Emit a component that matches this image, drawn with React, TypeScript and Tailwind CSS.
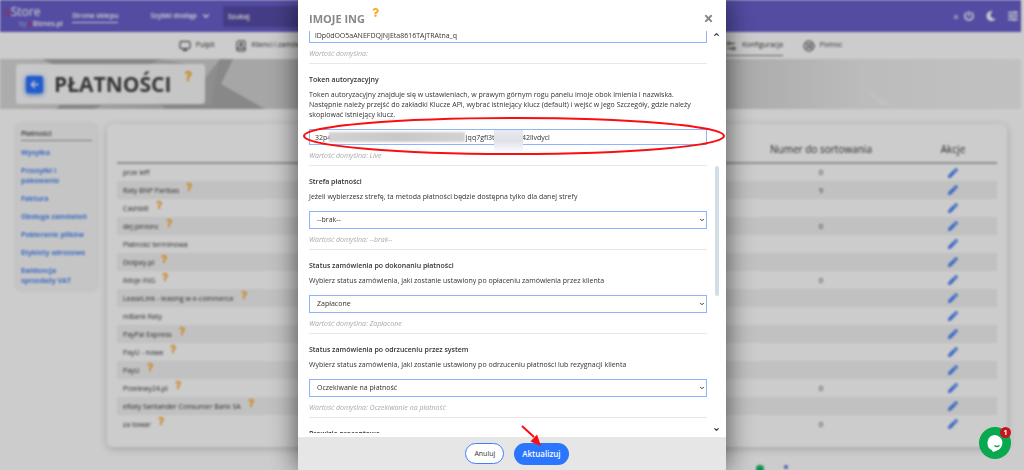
import type { ReactNode } from 'react';
import { FaArrowLeft, FaMoon, FaPen, FaPowerOff, FaQuestion, FaTimes } from 'react-icons/fa';
import { BookUser, ChevronDown, ChevronUp, LifeBuoy, Monitor, Settings2 } from 'lucide-react';

type Payment = { name: string; help?: boolean; order?: string };

const payments: Payment[] = [
  { name: 'prze leff', order: '0' },
  { name: 'Raty BNP Paribas', help: true, order: '9' },
  { name: 'Cashbill', help: true },
  { name: 'dej pinionc', help: true, order: '0' },
  { name: 'Płatność terminowa' },
  { name: 'Dotpay.pl', help: true },
  { name: 'iMoje ING', help: true, order: '0' },
  { name: 'LeaseLink - leasing w e-commerce', help: true },
  { name: 'mBank Raty' },
  { name: 'PayPal Express', help: true },
  { name: 'PayU - nowe', help: true },
  { name: 'PayU', help: true },
  { name: 'Przelewy24.pl', help: true, order: '0' },
  { name: 'eRaty Santander Consumer Bank SA', help: true },
  { name: 'za towar', help: true, order: '0' },
];

const sideLinks = [
  'Wysyłka',
  'Przesyłki i pakowanie',
  'Faktura',
  'Obsługa zamówień',
  'Pobieranie plików',
  'Etykiety adresowe',
  'Ewidencja sprzedaży VAT',
];

function TopBar() {
  return (
    <header className="flex h-8 items-center bg-[#685fcc] text-[8px] text-white">
      <div className="w-[72px] pt-px pl-[5px]">
        <div className="text-[12px] leading-[14px]">
          <span className="text-[#e0245e]">s</span>Store
        </div>
        <div className="pl-[14px] text-[7px] leading-[10px]">
          <span className="text-white/50">by</span> <span className="font-bold text-[#e0245e]">e</span>
          <span className="font-semibold">Biznes.pl</span>
        </div>
      </div>
      <a href="#sklep" className="border-b border-white text-[7px] leading-3 font-semibold">
        Strona sklepu
      </a>
      <button className="ml-8 flex items-center gap-1 text-[7px] font-semibold">
        Szybki dostęp <ChevronDown size={10} strokeWidth={3} />
      </button>
      <input
        aria-label="Szukaj"
        placeholder="Szukaj"
        className="ml-3 h-[21px] w-1/3 rounded-xs bg-[#554da8] px-[5px] text-[7px] font-semibold placeholder:text-white"
      />
      <div className="ml-auto flex items-center gap-3 pr-[3px]">
        <span className="flex items-center gap-[6px]">
          a
          <button aria-label="Wyloguj">
            <FaPowerOff size={10} />
          </button>
        </span>
        <button aria-label="Tryb nocny">
          <FaMoon size={10} />
        </button>
        <button aria-label="Ustawienia">
          <svg width="10" height="10" viewBox="0 0 10 10" stroke="currentColor" strokeWidth="1.3">
            <path d="M0 1.5h10M0 5h10M0 8.5h10M7 0v3M3 3.5v3M6 7v3" />
          </svg>
        </button>
      </div>
    </header>
  );
}

function NavItem({ icon, label, active }: { icon: ReactNode; label: string; active?: boolean }) {
  return (
    <a
      href="#nav"
      className={`flex h-[20px] items-center gap-[5px] border-b ${active ? 'border-[#777]' : 'border-transparent'}`}
    >
      {icon}
      {label}
    </a>
  );
}

function MainNav() {
  return (
    <nav className="flex h-[27px] justify-center bg-white pt-1 text-[7px] text-[#333]">
      <div className="flex w-[65%] justify-between">
        <div className="flex gap-5">
          <NavItem icon={<Monitor size={12} />} label="Pulpit" />
          <NavItem icon={<BookUser size={12} />} label="Klienci i zamówienia" />
        </div>
        <div className="flex gap-5">
          <NavItem icon={<Settings2 size={12} />} label="Konfiguracja" active />
          <NavItem icon={<LifeBuoy size={12} />} label="Pomoc" />
        </div>
      </div>
    </nav>
  );
}

function Banner() {
  return (
    <div className="relative flex h-[50px] items-center overflow-hidden bg-[#aeaeae] px-4">
      <svg className="absolute inset-0 h-full w-full" viewBox="0 0 1021 50" preserveAspectRatio="none">
        <defs>
          <linearGradient id="fade" x1="0" x2="1" y1="0" y2="0">
            <stop offset="0" stopColor="#d9d9d9" />
            <stop offset="0.05" stopColor="#d4d4d4" />
            <stop offset="0.25" stopColor="#a8a8a8" />
            <stop offset="0.7" stopColor="#d2d2d2" />
            <stop offset="0.85" stopColor="#ececec" />
            <stop offset="1" stopColor="#f2f2f2" />
          </linearGradient>
        </defs>
        <rect width="1021" height="50" fill="url(#fade)" />
        <path d="M42 0h118l-14 8H58zM60 46h42l-8 4H56zM162 46h50L219 0h102v50H165z" fill="#aaa" />
        <path d="M160 0h60L204 20V8z" fill="#cfcfcf" />
        <path d="M221 25l12-25h90v50h-58z" fill="#d0d0d0" />
        <path d="M862 28l32 18-12 2z" fill="#f0f0f0" />
      </svg>
      <div className="relative flex h-10 items-center rounded-sm bg-white/90 pr-3 pl-[10px]">
        <a
          href="#wstecz"
          aria-label="Wstecz"
          className="flex size-[17px] items-center justify-center rounded-xs bg-[#2b72ff] text-white shadow-[0_1px_5px_#2b72ff]"
        >
          <FaArrowLeft size={9} />
        </a>
        <h1 className="ml-[11px] text-[21px] leading-none font-bold text-[#444]">PŁATNOŚCI</h1>
        <FaQuestion size={10} className="mb-4 ml-3 text-[#ffa51f]" />
      </div>
    </div>
  );
}

function SideMenu() {
  return (
    <aside className="w-[81px] shrink-0 self-start rounded-md bg-[#f7f7f7] px-[5px] pt-[5px] pb-1 text-[7px] leading-[10px] font-bold shadow-[0_0_4px_rgba(0,0,0,0.12)]">
      <div className="mb-[7px] border-b border-[#999] pb-px font-semibold text-[#444]">Płatności</div>
      <ul className="flex flex-col gap-2">
        {sideLinks.map((link) => (
          <li key={link}>
            <a href="#menu" className="text-[#4c87f5]">
              {link}
            </a>
          </li>
        ))}
      </ul>
    </aside>
  );
}

function PaymentsTable() {
  return (
    <section className="min-w-0 flex-1 rounded-md bg-white px-[10px] pt-3 pb-[14px] shadow-[0_2px_8px_rgba(0,0,0,0.2)]">
      <table className="w-full table-fixed text-[7px] leading-[10px] text-[#333]">
        <colgroup>
          <col className="w-[70%]" />
          <col className="w-[20%]" />
          <col className="w-[10%]" />
        </colgroup>
        <thead>
          <tr className="h-[27px] border-b-2 border-[#b5b5b5] text-[10px]">
            <td />
            <th className="font-medium">Numer do sortowania</th>
            <th className="font-medium">Akcje</th>
          </tr>
        </thead>
        <tbody>
          {payments.map((p) => (
            <tr key={p.name} className="h-[18px] even:bg-[#f2f2f2]">
              <td className="pt-px pl-[6px]">
                <span className="flex items-center gap-[6px]">
                  {p.name}
                  {p.help && <FaQuestion size={8} className="-mt-2 text-[#ffa51f]" />}
                </span>
              </td>
              <td className="pt-px text-center">{p.order}</td>
              <td className="text-center">
                <button aria-label="Edytuj" className="block w-full">
                  <FaPen size={10} className="mx-auto text-[#4c87f5]" />
                </button>
              </td>
            </tr>
          ))}
        </tbody>
      </table>
    </section>
  );
}

const box = 'w-full border border-[#8db4ff] bg-white text-[7px] text-[#333] outline-none';

function Hint({ children }: { children: ReactNode }) {
  return <p className="mt-[6px] text-[#aaa] italic">Wartość domyślna: {children}</p>;
}

function SelectField({ id, label, text, value }: { id: string; label: string; text: string; value: string }) {
  return (
    <div className="border-b border-[#e8e8e8] pt-[11px] pb-1">
      <label htmlFor={id} className="block font-semibold">
        {label}
      </label>
      <p className="mt-[5px]">{text}</p>
      <div className="relative mt-[9px]">
        <select id={id} className={`${box} block h-[18px] appearance-none pl-[7px]`}>
          <option>{value}</option>
        </select>
        <ChevronDown size={6} strokeWidth={4} className="pointer-events-none absolute top-[6px] right-[2px]" />
      </div>
      <Hint>{value}</Hint>
    </div>
  );
}

function TokenField() {
  return (
    <div className="border-b border-[#e8e8e8] pt-[11px] pb-1">
      <label htmlFor="token" className="block font-semibold">
        Token autoryzacyjny
      </label>
      <p className="mt-[5px]">
        Token autoryzacyjny znajduje się w ustawieniach, w prawym górnym rogu panelu imoje obok imienia i nazwiska.
        Następnie należy przejść do zakładki Klucze API, wybrać istniejący klucz (default) i wejść w jego Szczegóły,
        gdzie należy skopiować istniejący klucz.
      </p>
      <div className="relative mt-[9px]">
        <input
          id="token"
          defaultValue={'32p4' + ' '.repeat(74) + 'jqq7gfi3t' + ' '.repeat(15) + '42llvdycl'}
          className={`${box} block h-4 px-[5px]`}
        />
        {/* masked parts of the token */}
        <span className="absolute top-[3px] left-5 h-[10px] w-[136px] bg-linear-to-r from-[#d2d2d2] via-[#c8c8c8] to-[#d2d2d2] blur-[1px]" />
        <span className="absolute top-px left-[185px] h-[21px] w-[29px] bg-linear-to-b from-[#e9eaee] via-[#dfe1e6] to-[#f7f9ff]" />
        {/* marker around the field */}
        <svg
          className="pointer-events-none absolute -top-[13px] -left-[7px] z-10 h-10 w-[calc(100%+26px)]"
          viewBox="0 0 424 40"
          preserveAspectRatio="none"
          fill="none"
        >
          <ellipse cx="212" cy="20" rx="210" ry="18" stroke="#fa0f0f" strokeWidth="2" />
        </svg>
      </div>
      <Hint>Live</Hint>
    </div>
  );
}

function EditDialog() {
  return (
    <div
      role="dialog"
      aria-labelledby="dialog-title"
      className="relative flex h-full w-full max-w-[428px] flex-col bg-white text-[7px] leading-[10px] text-[#333] shadow-[0_0_26px_rgba(0,0,0,0.65)]"
    >
      <div className="flex h-[31px] shrink-0 items-center pt-[6px] pr-3 pl-[11px]">
        <h2 id="dialog-title" className="text-[11px] font-bold text-[#888]">
          IMOJE ING
        </h2>
        <FaQuestion size={9} className="mb-3 ml-[6px] text-[#ffa51f]" />
        <button aria-label="Zamknij" className="ml-auto text-[#888]">
          <FaTimes size={11} />
        </button>
      </div>

      <div className="flex min-h-0 flex-1 overflow-hidden">
        <div className="min-w-0 flex-1 pl-[11px]">
          <div className="-mt-1 border-b border-[#e8e8e8] pb-1">
            <input
              aria-label="Klucz"
              defaultValue="lDp0dOO5aANEFDQJNJEta8616TAjTRAtna_q"
              className={`${box} block h-4 px-[5px]`}
            />
            <Hint>{null}</Hint>
          </div>
          <TokenField />
          <SelectField
            id="zone"
            label="Strefa płatności"
            text="Jeżeli wybierzesz strefę, ta metoda płatności będzie dostępna tylko dla danej strefy"
            value="--brak--"
          />
          <SelectField
            id="paid"
            label="Status zamówienia po dokonaniu płatności"
            text="Wybierz status zamówienia, jaki zostanie ustawiony po opłaceniu zamówienia przez klienta"
            value="Zapłacone"
          />
          <SelectField
            id="rejected"
            label="Status zamówienia po odrzuceniu przez system"
            text="Wybierz status zamówienia, jaki zostanie ustawiony po odrzuceniu płatności lub rezygnacji klienta"
            value="Oczekiwanie na płatność"
          />
          <p className="pt-[11px] font-semibold">Prowizja procentowa</p>
        </div>
        {/* scrollbar */}
        <div className="flex w-[19px] shrink-0 flex-col items-center">
          <ChevronUp size={7} strokeWidth={4} />
          <div className="flex w-1 flex-1 flex-col">
            <div className="grow-[128]" />
            <div className="grow-[130] rounded-xs bg-[#d3dde6]" />
            <div className="grow-[130]" />
          </div>
          <ChevronDown size={7} strokeWidth={4} />
        </div>
      </div>

      <div className="mt-1 flex h-[33px] shrink-0 items-center justify-center gap-[10px] bg-[#e6e6e6] pl-[10px]">
        <button className="h-[21px] rounded-full border border-[#3f80ff] bg-white px-2">Anuluj</button>
        <div className="relative">
          <button className="h-[22px] rounded-full bg-[#2b76ff] px-2 text-[8px] font-semibold text-white">
            Aktualizuj
          </button>
          <svg
            className="pointer-events-none absolute -top-[18px] left-[6px]"
            width="24"
            height="24"
            viewBox="0 0 24 24"
            fill="#fa0f0f"
          >
            <path d="M2 1l12 11" stroke="#fa0f0f" strokeWidth="2" />
            <path d="M21 21L10.500 16.500L17 9.500Z" />
          </svg>
        </div>
      </div>
    </div>
  );
}

function ChatButton() {
  return (
    <button aria-label="Czat" className="fixed right-[13px] bottom-[11px] size-8 rounded-full bg-[#0aa84f]">
      <svg viewBox="0 0 32 32" className="size-8">
        <path d="M16 8a8 8 0 0 0-3 15.200L14 25l3.500-1.300A8 8 0 0 0 16 8z" fill="#fff" />
        <path d="M15.500 18.500q2.500 2 5 0" stroke="#0aa84f" strokeWidth="1.400" fill="none" />
      </svg>
      <span className="absolute top-0 right-0 flex size-[11px] items-center justify-center rounded-full bg-[#c4161c] text-[7px] leading-none font-bold text-white">
        1
      </span>
    </button>
  );
}

export default function App() {
  return (
    <div className="relative h-screen overflow-hidden bg-white font-['Open_Sans',sans-serif]">
      {/* Page under the dialog */}
      <div className="pr-[3px] blur-[1px]">
        <TopBar />
        <MainNav />
        <Banner />
        <main className="flex gap-[10px] pt-[15px] pr-[14px] pl-4">
          <SideMenu />
          <PaymentsTable />
        </main>
        <footer className="flex pt-[18px]">
          <span className="ml-[74%] size-2 rounded-full bg-[#12b76a]" />
          <span className="ml-5 size-1 rounded-full bg-[#5b6fe0]" />
        </footer>
      </div>

      {/* Backdrop */}
      <div className="absolute inset-0 flex justify-center overflow-hidden bg-black/20">
        <EditDialog />
      </div>

      <ChatButton />
    </div>
  );
}
